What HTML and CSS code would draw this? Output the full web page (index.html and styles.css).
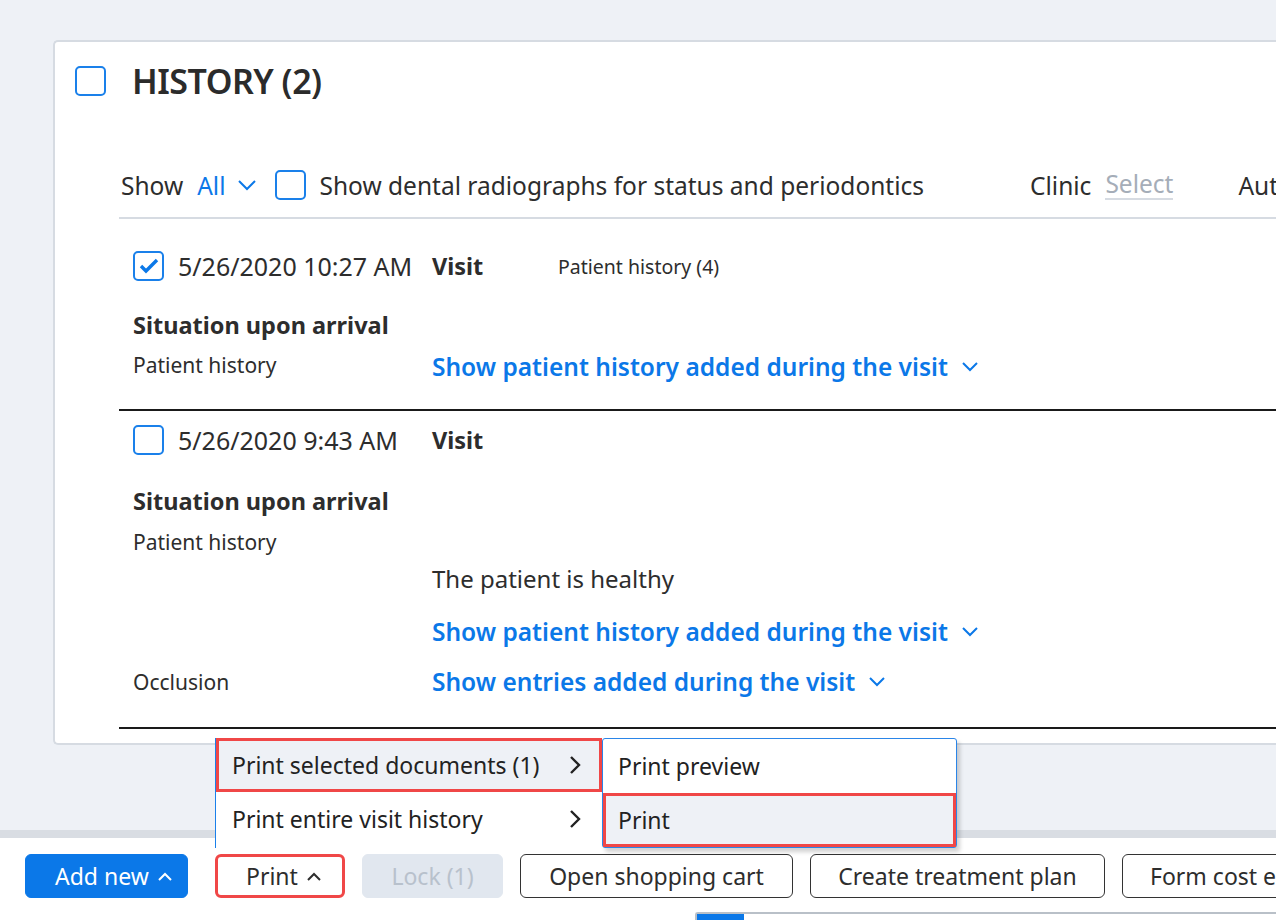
FILE: index.html
```html
<!DOCTYPE html>
<html lang="en">
<head>
    <meta charset="UTF-8">
    <title>History</title>
    <link rel="stylesheet" href="styles.css">
</head>
<body>
<div class="page">
    <main class="content">
        <section class="card">
            <header class="card-head">
                <span class="checkbox"></span>
                <h1>HISTORY (2)</h1>
            </header>

            <!-- filters -->
            <div class="filters">
                <span class="filter-label">Show</span>
                <span class="dropdown">All
                    <svg class="chev" width="20" height="12" viewBox="0 0 20 12"><path d="M2 2l8 8 8-8" fill="none" stroke="#0b78e8" stroke-width="2"/></svg>
                </span>
                <span class="checkbox"></span>
                <span class="filter-text">Show dental radiographs for status and periodontics</span>
                <span class="filter-label clinic">Clinic</span>
                <span class="placeholder">Select</span>
                <span class="filter-label author">Author</span>
            </div>

            <!-- entry 1 -->
            <article class="entry">
                <div class="row row-head">
                    <div class="cell-left">
                        <span class="checkbox checked">
                            <svg width="22" height="18" viewBox="0 0 22 18"><path d="M3 9l5 5L19 3" fill="none" stroke="#0b78e8" stroke-width="3.4"/></svg>
                        </span>
                        <span class="date">5/26/2020 10:27 AM</span>
                    </div>
                    <div class="cell-right">
                        <span class="visit">Visit</span>
                        <span class="small-note">Patient history (4)</span>
                    </div>
                </div>
                <div class="row row-title">
                    <div class="section-title">Situation upon arrival</div>
                </div>
                <div class="row row-field">
                    <div class="field-label">Patient history</div>
                    <div class="cell-right">
                        <a class="more-link">Show patient history added during the visit
                            <svg class="chev" width="18" height="12" viewBox="0 0 18 12"><path d="M2 2l7 7 7-7" fill="none" stroke="#0b78e8" stroke-width="2"/></svg>
                        </a>
                    </div>
                </div>
            </article>

            <!-- entry 2 -->
            <article class="entry entry-second">
                <div class="row row-head">
                    <div class="cell-left">
                        <span class="checkbox"></span>
                        <span class="date">5/26/2020 9:43 AM</span>
                    </div>
                    <div class="cell-right">
                        <span class="visit">Visit</span>
                    </div>
                </div>
                <div class="row row-title">
                    <div class="section-title">Situation upon arrival</div>
                </div>
                <div class="row row-field">
                    <div class="field-label">Patient history</div>
                </div>
                <div class="row row-value">
                    <div></div>
                    <div class="value-text">The patient is healthy</div>
                </div>
                <div class="row row-link">
                    <div></div>
                    <a class="more-link">Show patient history added during the visit
                        <svg class="chev" width="18" height="12" viewBox="0 0 18 12"><path d="M2 2l7 7 7-7" fill="none" stroke="#0b78e8" stroke-width="2"/></svg>
                    </a>
                </div>
                <div class="row row-last">
                    <div class="field-label">Occlusion</div>
                    <a class="more-link">Show entries added during the visit
                        <svg class="chev" width="18" height="12" viewBox="0 0 18 12"><path d="M2 2l7 7 7-7" fill="none" stroke="#0b78e8" stroke-width="2"/></svg>
                    </a>
                </div>
            </article>
        </section>
    </main>

    <footer class="toolbar">
        <div class="buttons">
            <button class="btn btn-primary">Add new
                <svg class="caret" width="16" height="10" viewBox="0 0 16 10"><path d="M2 8l6-6 6 6" fill="none" stroke="#fff" stroke-width="2"/></svg>
            </button>
            <button class="btn btn-plain marked">Print
                <svg class="caret" width="16" height="10" viewBox="0 0 16 10"><path d="M2 8l6-6 6 6" fill="none" stroke="#2d2d2d" stroke-width="2"/></svg>
            </button>
            <button class="btn btn-disabled">Lock (1)</button>
            <button class="btn btn-outline btn-cart">Open shopping cart</button>
            <button class="btn btn-outline btn-plan">Create treatment plan</button>
            <button class="btn btn-outline">Form cost estimate</button>
        </div>
        <div class="scrollbar"><span class="thumb"></span></div>
    </footer>

    <!-- print menu (open) -->
    <div class="print-menu">
        <ul class="menu">
            <li class="menu-item active marked">Print selected documents (1)
                <svg width="14" height="20" viewBox="0 0 14 20"><path d="M3 2l8 8-8 8" fill="none" stroke="#222" stroke-width="2.4"/></svg>
            </li>
            <li class="menu-item">Print entire visit history
                <svg width="14" height="20" viewBox="0 0 14 20"><path d="M3 2l8 8-8 8" fill="none" stroke="#222" stroke-width="2.4"/></svg>
            </li>
        </ul>
        <ul class="menu submenu">
            <li class="menu-item">Print preview</li>
            <li class="menu-item active marked">Print</li>
        </ul>
    </div>
</div>
</body>
</html>
```

FILE: styles.css
```css
* { box-sizing: border-box; }
body { margin: 0; font-family: "Noto Sans", "Open Sans", sans-serif; color: #2d2d2d; background: #eef1f6; }
.page { position: relative; height: 920px; width: 1276px; overflow: hidden; display: flex; flex-direction: column; }

.content { height: 830px; padding: 40px 0 0 53px; }
.card { width: 1400px; height: 705px; background: #fff; border: 2px solid #d6dbe2; border-right: none; border-radius: 5px 0 0 5px; padding: 24px 0 0 20px; }

.checkbox { width: 31px; height: 30px; border: 2px solid #1a80ea; border-radius: 5px; display: inline-flex; align-items: center; justify-content: center; flex: none; background: #fff; }

.card-head { display: flex; align-items: center; gap: 26px; height: 30px; }
.card-head h1 { margin: 0; font-size: 34px; font-weight: 600; letter-spacing: -0.5px; color: #2b2b2b; }

.filters { display: flex; align-items: center; height: 40px; margin: 69px 0 12px 46px; font-size: 24.5px; white-space: nowrap; }
.filter-label { margin-right: 14px; }
.dropdown { color: #0b78e8; display: inline-flex; align-items: center; gap: 11px; margin-right: 18px; }
.filter-text { margin-left: 14px; }
.clinic { margin-left: 106px; }
.placeholder { color: #a5adb8; border-bottom: 2px solid #d6dbe2; line-height: 28px; margin-right: 65px; }
.author { margin-right: 0; }

.entry { margin-left: 44px; border-top: 2px solid #d6dbe2; padding: 30px 0 30px 14px; }
.entry-second { border-top: 2px solid #1a1a1a; padding-top: 12px; padding-bottom: 32px; border-bottom: 2px solid #1a1a1a; }

.row { display: grid; grid-template-columns: 299px 1fr; align-items: center; }
.row-head { height: 30px; }
.cell-left { display: flex; align-items: center; gap: 14px; }
.cell-right { display: flex; align-items: center; }
.date { font-size: 25px; white-space: nowrap; }
.visit { font-size: 23.5px; font-weight: 700; width: 126px; }
.small-note { font-size: 19.5px; }
.row-title { height: 30px; margin-top: 30px; }
.entry-second .row-title { margin-top: 32px; }
.section-title { font-size: 23.5px; font-weight: 700; white-space: nowrap; }
.row-field { height: 32px; margin-top: 8px; }
.entry-second .row-field { margin-top: 11px; }
.field-label { font-size: 21px; }
.more-link { color: #0b78e8; font-size: 24.5px; font-weight: 600; display: inline-flex; align-items: center; gap: 13px; white-space: nowrap; }
.entry .row-field .cell-right { padding-top: 3px; }
.row-value { height: 30px; margin-top: 4px; }
.value-text { font-size: 24px; }
.row-link { height: 30px; margin-top: 23px; }
.row-last { height: 30px; margin-top: 20px; }

/* toolbar */
.toolbar { flex: 1; background: #fff; border-top: 8px solid #d9dde3; padding: 16px 0 0 25px; position: relative; }
.buttons { display: flex; gap: 17px; white-space: nowrap; }
.btn { font-family: inherit; font-size: 23px; height: 44px; border-radius: 6px; padding: 0 22px; background: #fff; color: #2d2d2d; border: 1.5px solid #333; flex: none; display: inline-flex; align-items: center; justify-content: center; gap: 8px; }
.btn-primary { background: #0b78e8; border-color: #0b78e8; color: #fff; width: 163px; margin-right: 10px; justify-content: flex-start; padding: 0 0 0 29px; }
.btn-plain { border: none; width: 130px; justify-content: flex-start; padding: 0 0 0 31px; }
.btn-disabled { background: #e1e7ef; border-color: #e1e7ef; color: #b8c1cc; width: 141px; }
.btn-cart { width: 273px; }
.btn-plan { width: 295px; }
.btn-outline:last-child { justify-content: flex-start; padding-left: 27px; }
.caret { margin-top: 2px; flex: none; }
.marked { outline: 3px solid #f04747; outline-offset: -3px; }

.scrollbar { position: absolute; left: 695px; top: 74px; width: 700px; height: 10px; border-top: 2px solid #b9c0c8; border-left: 2px solid #b9c0c8; border-radius: 3px 0 0 0; }
.thumb { display: block; width: 47px; height: 8px; background: #0b78e8; }

/* print menu */
.print-menu { position: absolute; left: 215px; top: 738px; display: flex; }
.menu { list-style: none; margin: 0; padding: 0; background: #fff; font-size: 23px; color: #222; }
.menu > .menu-item { height: 54px; display: flex; align-items: center; justify-content: space-between; padding: 0 20px 0 16px; }
.print-menu > .menu:first-child { width: 387px; border-left: 1px solid #1a80ea; }
.menu-item.active { background: #eef1f6; }
.submenu { width: 355px; border: 1.5px solid #2a85e8; border-radius: 3px; box-shadow: 3px 4px 4px rgba(0,0,0,0.18); }
.submenu .menu-item { padding-left: 15px; }
```
